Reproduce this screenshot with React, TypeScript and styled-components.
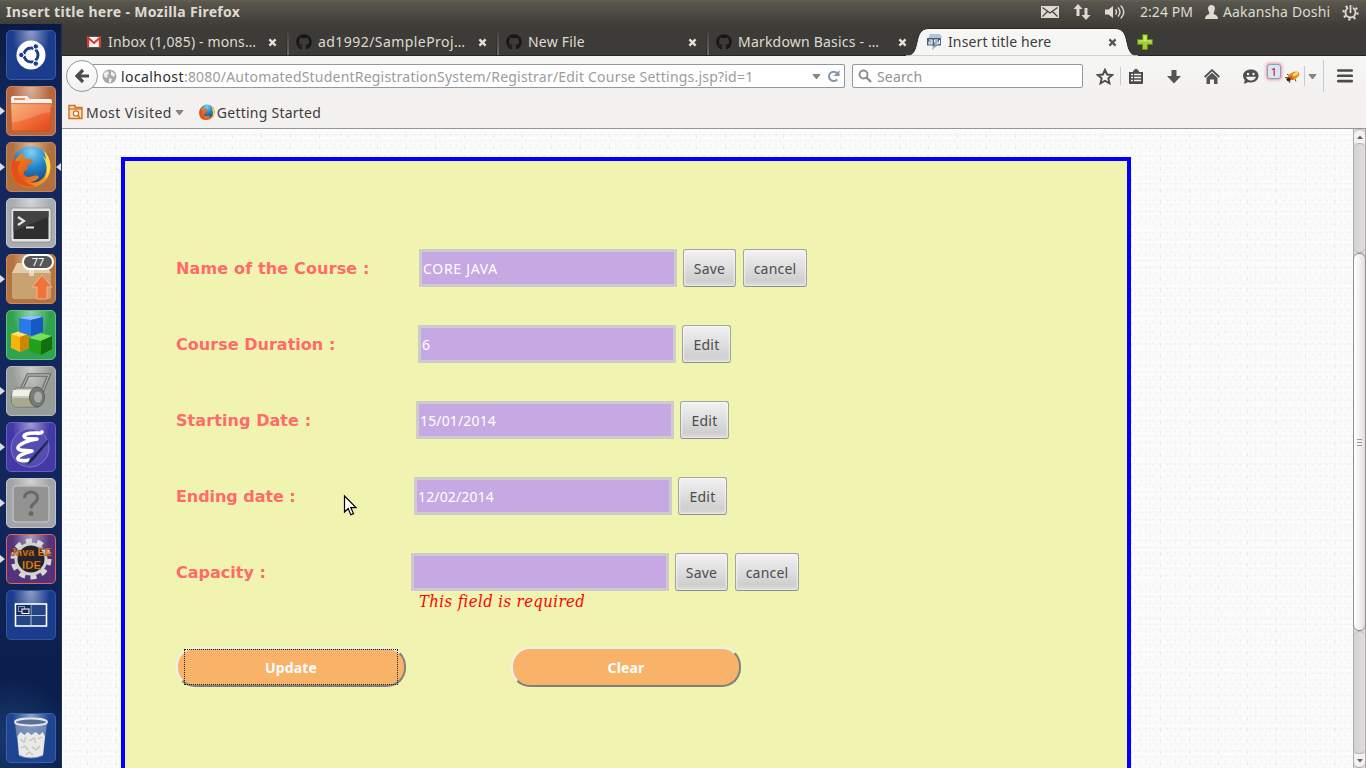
import React from 'react';
import styled, { createGlobalStyle, css } from 'styled-components';
import { FaGithub } from 'react-icons/fa';

const GlobalStyle = createGlobalStyle`
  * { box-sizing: border-box; }
  html, body { margin: 0; padding: 0; overflow: hidden; }
  body { font: 14px/20px "Noto Sans", "Open Sans", sans-serif; color: #3c3c3c; }
`;

const Screen = styled.div`
  position: relative;
  width: 1366px;
  height: 768px;
  display: flex;
  flex-direction: column;
  overflow: hidden;
`;

const Text = styled.span<{ $track?: number }>`
  white-space: pre;
  letter-spacing: ${p => p.$track ?? 0}px;
`;

/* ---------- top panel ---------- */
const TopPanel = styled.header`
  flex: none;
  height: 24px;
  display: flex;
  align-items: center;
  padding: 0 7px 0 6px;
  color: #dfdbd2;
  background: linear-gradient(#646052 0, #59564d 2px, #3f3e39 100%);
`;
const WindowTitle = styled(Text)`
  flex: 1;
  font-weight: bold;
`;
const Indicator = styled.span<{ $w: number }>`
  display: flex;
  align-items: center;
  flex: none;
  width: ${p => p.$w}px;
  svg { display: block; flex: none; }
`;

const Below = styled.div`
  flex: 1;
  min-height: 0;
  display: flex;
`;

/* ---------- launcher ---------- */
const Launcher = styled.nav`
  flex: none;
  width: 62px;
  display: flex;
  flex-direction: column;
  gap: 6px;
  padding: 6px 0 5px 6px;
  border-right: 1px solid #26334f;
  background: radial-gradient(circle at 20% 96%, #1b3a72 0, transparent 60px),
    linear-gradient(#0a1a42 0, #14285f 12%, #13275a 35%, #11265c 65%, #0b1f4e 88%, #0a204b 100%);
`;
const Tile = styled.div<{ $bg: string; $edge?: string; $last?: boolean }>`
  position: relative;
  flex: none;
  width: 50px;
  height: 50px;
  border-radius: 5px;
  border: 1px solid ${p => p.$edge ?? 'rgba(255,255,255,.22)'};
  background: radial-gradient(ellipse at 50% 0, rgba(255,255,255,.5) 0, transparent 55%), ${p => p.$bg};
  ${p => p.$last && css`margin-top: auto;`}
  > svg { display: block; width: 48px; height: 48px; }
`;
const Running = styled.i<{ $right?: boolean }>`
  position: absolute;
  top: 20px;
  ${p => (p.$right ? 'right: -6px;' : 'left: -7px;')}
  border: solid transparent;
  border-width: 4px 0;
  ${p => (p.$right ? 'border-right: 5px solid #ddd;' : 'border-left: 5px solid #ddd;')}
`;
const Count = styled.b`
  position: absolute;
  top: -1px;
  left: 15px;
  width: 32px;
  height: 16px;
  border: 2px solid #fff;
  border-radius: 8px;
  background: #565656;
  color: #fff;
  font: 11px/12px "Noto Sans", sans-serif;
  text-align: center;
`;

/* ---------- browser ---------- */
const Browser = styled.main`
  flex: 1;
  min-width: 0;
  display: flex;
  flex-direction: column;
`;
const TabStrip = styled.div`
  flex: none;
  height: 32px;
  display: flex;
  padding-left: 15px;
  background: linear-gradient(#3f3e39, #3c3b37 6px, #3c3b37 31px, #262522 31px);
`;
const TabBox = styled.div<{ $active?: boolean; $line?: boolean }>`
  position: relative;
  flex: none;
  width: 210px;
  display: flex;
  align-items: center;
  padding: 4px 9px 0 8px;
  color: ${p => (p.$active ? '#3c3c3c' : '#dfdbd2')};
  ${p => p.$line && css`
    &::after {
      content: '';
      position: absolute;
      right: -2px;
      top: 4px;
      bottom: 1px;
      width: 2px;
      border-left: 1px solid #2a2926;
      background: #6b6a5f;
      mask: linear-gradient(transparent, #000);
    }
  `}
`;
const TabShape = styled.svg`
  position: absolute;
  left: -14px;
  top: 3px;
  width: 238px;
  height: 29px;
`;
const Favicon = styled.span`
  position: relative;
  display: flex;
  justify-content: center;
  align-items: center;
  width: 18px;
  height: 18px;
  margin-right: 5px;
`;
const TabTitle = styled(Text)`
  position: relative;
  flex: 1;
`;
const CloseMark = styled.svg`
  position: relative;
  width: 9px;
  height: 9px;
  margin-right: 1px;
`;
const NewTab = styled.svg`
  width: 18px;
  height: 18px;
  margin: 9px 0 0 9px;
`;

const NavBar = styled.div`
  flex: none;
  height: 40px;
  display: flex;
  align-items: center;
  background: linear-gradient(#f6f6f5, #f2f1f0);
`;
const BackButton = styled.div`
  position: relative;
  z-index: 1;
  display: flex;
  justify-content: center;
  align-items: center;
  width: 32px;
  height: 32px;
  margin-left: 4px;
  border: 1px solid #8f99a6;
  border-radius: 50%;
  background: linear-gradient(#fff, #f1f1f0);
`;
const Field = styled.div<{ $w: number }>`
  flex: none;
  display: flex;
  align-items: center;
  width: ${p => p.$w}px;
  height: 24px;
  border: 1px solid #96979a;
  border-radius: 2px;
  background: #fff;
`;
const UrlField = styled(Field)`
  margin: 0 7px 0 -10px;
  padding: 0 4px 0 14px;
  border-left: 0;
`;
const Address = styled(Text)`
  flex: 1;
  margin-left: 4px;
  padding-top: 1px;
  color: #9b9b9b;
  b { color: #2b2b2b; font-weight: normal; letter-spacing: .42px; }
`;
const SearchField = styled(Field)`
  padding-left: 5px;
  gap: 5px;
  margin-right: 6px;
  color: #929292;
`;
const SearchHint = styled(Text)`
  padding-top: 1px;
`;
const Slot = styled.span<{ $w: number; $shift?: number }>`
  position: relative;
  flex: none;
  display: flex;
  justify-content: center;
  align-items: center;
  width: ${p => p.$w}px;
  height: 40px;
  padding-left: ${p => p.$shift ?? 0}px;
`;
const Divider = styled.i<{ $h: number }>`
  flex: none;
  width: 1px;
  height: ${p => p.$h}px;
  background: #c3ccd6;
`;
const ErrorBadge = styled.b`
  position: absolute;
  z-index: 1;
  left: -6px;
  top: 8px;
  width: 14px;
  height: 15px;
  border: 1px solid #8d9dbb;
  border-radius: 3px;
  background: #dce5f2;
  box-shadow: 0 0 3px 1px #e59a9a;
  color: #c00020;
  font: 11px/13px "Noto Sans", sans-serif;
  text-align: center;
`;
const Bookmarks = styled.div`
  flex: none;
  height: 33px;
  display: flex;
  align-items: center;
  padding-left: 6px;
  background: #f2f1f0;
  border-bottom: 1px solid #979694;
`;
const BookmarkText = styled(Text)`
  margin-left: 2px;
  padding-top: 2px;
`;
const Caret = styled.svg<{ $gap?: string }>`
  flex: none;
  width: 9px;
  height: 7px;
  margin: ${p => p.$gap ?? '0'};
`;

/* ---------- page ---------- */
const Viewport = styled.div`
  flex: 1;
  min-height: 0;
  display: flex;
`;
const Page = styled.div`
  position: relative;
  flex: 1;
  padding: 28px 0 0 59px;
  background-color: #fcfcfc;
  background-image:
    radial-gradient(circle, #e6e6e6 0, transparent 1.2px),
    radial-gradient(circle, #eeeeee 0, transparent 1.2px),
    radial-gradient(ellipse 1px 2px, #e2e2e2 0, transparent 100%),
    radial-gradient(circle, #f4f4f4 0, transparent 1.5px),
    radial-gradient(circle, #f6f6f6 0, transparent 1.5px);
  background-size: 7.25px 11px, 7.25px 11px, 29px 11px, 5px 4px, 3px 7px;
  background-position: 0 0, 3.6px 5.5px, 11px 2px, 1px 1px, 0 2px;
`;
const Panel = styled.section`
  width: 1010px;
  height: 700px;
  border: 4px solid #0000ff;
  background: #f1f3b0;
  padding: 88px 0 0 51px;
`;
const Rows = styled.div`
  display: flex;
  flex-direction: column;
  gap: 38px;
`;
const Row = styled.div`
  display: flex;
  height: 38px;
`;
const Label = styled.label<{ $w: number; $track: number }>`
  flex: none;
  width: ${p => p.$w}px;
  padding-top: 1px;
  color: #ff6a6a;
  font: bold 16px/38px "DejaVu Sans", sans-serif;
  letter-spacing: ${p => p.$track}px;
`;
const Input = styled.div<{ $track?: number }>`
  flex: none;
  width: 258px;
  height: 38px;
  margin-right: 6px;
  padding: 1px 1px 0;
  border: 3px solid #cccccc;
  background: #c6a9e3;
  color: #fff;
  line-height: 32px;
  letter-spacing: ${p => p.$track ?? 0}px;
`;
const Button = styled.button<{ $w: number }>`
  flex: none;
  width: ${p => p.$w}px;
  height: 38px;
  margin: 0 7px 0 0;
  padding: 1px 0 0;
  border: 1px solid #a3a3a3;
  border-bottom-color: #8d8d8d;
  border-radius: 3px;
  background: linear-gradient(#f1f1f1, #dedede 50%, #cfcfcf 85%, #d8d8d8);
  box-shadow: inset 0 0 2px 1px rgba(255,255,255,.6);
  color: #4c4c4c;
  font: 14px/20px "Noto Sans", sans-serif;
  letter-spacing: .2px;
`;
const ErrorText = styled.p`
  margin: 1px 0 35px 243px;
  color: #ff0000;
  font: italic 16.5px/20px "DejaVu Serif Condensed", "DejaVu Serif", serif;
  letter-spacing: .43px;
`;
const Actions = styled.div`
  display: flex;
  gap: 105px;
`;
const Pill = styled.button<{ $focused?: boolean }>`
  position: relative;
  width: 230px;
  height: 40px;
  padding: 2px 0 0;
  border: 2px solid;
  border-color: #f0f0f0 #808080 #808080 #f0f0f0;
  border-radius: 19px;
  background: #f9b369;
  color: #fff;
  font: bold 14px/20px "Noto Sans", sans-serif;
  letter-spacing: .15px;
  ${p => p.$focused && css`
    &::after {
      content: '';
      position: absolute;
      inset: 0 6px;
      border: 1px dotted #222;
    }
  `}
`;

/* ---------- scrollbar ---------- */
const Scrollbar = styled.div`
  flex: none;
  width: 13px;
  display: flex;
  flex-direction: column;
  background: #dbdad8;
  border: 1px solid #aeadab;
  border-width: 0 1px;
`;
const Stepper = styled.span<{ $down?: boolean }>`
  flex: none;
  height: 14px;
  display: flex;
  align-items: center;
  justify-content: center;
  border: 1px solid #aaa9a6;
  border-width: ${p => (p.$down ? '0 0 1px' : '1px 0 0')};
  border-radius: ${p => (p.$down ? '0 0 6px 6px' : '6px 6px 0 0')};
  background: #f3f2f1;
`;
const Trough = styled.span<{ $h: number }>`
  flex: none;
  height: ${p => p.$h}px;
  border: 1px solid #b5b4b1;
  border-width: 1px 0;
  border-radius: 6px;
  background: linear-gradient(90deg, #d3d2d0, #e0dfdd);
`;
const Thumb = styled.span`
  flex: none;
  height: 378px;
  margin: 0 -1px;
  display: flex;
  align-items: center;
  justify-content: center;
  border: 1px solid #8f8e8a;
  border-radius: 6px;
  background: linear-gradient(90deg, #fff, #f1f0ee 55%, #dedddb);
`;

const Cursor = styled.svg`
  position: absolute;
  left: 343px;
  top: 494px;
  width: 14px;
  height: 23px;
`;

const Down = ({ gap }: { gap?: string }) => (
  <Caret $gap={gap} viewBox="0 0 9 7"><path d="M1 1.500h7L4.500 6z" fill="#8a8a8a" stroke="#666" strokeWidth=".7" /></Caret>
);

const FirefoxBall = () => (
  <>
    <defs>
      <linearGradient id="ffFox" x1="0" y1="0" x2="1" y2="1">
        <stop offset="0" stopColor="#f59a21" /><stop offset=".5" stopColor="#e5591a" /><stop offset="1" stopColor="#f6b526" />
      </linearGradient>
      <radialGradient id="ffSky" cx=".5" cy=".15" r=".9">
        <stop offset="0" stopColor="#7fd0f4" /><stop offset=".45" stopColor="#2485c9" /><stop offset="1" stopColor="#14316f" />
      </radialGradient>
    </defs>
    <circle cx="24" cy="23" r="19.500" fill="url(#ffSky)" />
    <path d="M37 8c9 8 9 23 0 31-9 8-23 7-30-1C2 30 3 20 7 13l1 5c2-4 5-7 9-8-1 3-1 4 1 6 3 0 6 0 8 1-1 3-4 4-6 6l1 4c-3 0-5 1-4 4 2 4 6 3 9 2 4-1 5 0 6 1-2 4-7 5-10 5 9 2 15-3 17-10 2-7 2-14-1-20z" fill="url(#ffFox)" />
    <path d="M36 7c9 8 10 21 2 30 3-9 2-19-3-24 3 2 4 3 4 5 0-4-1-8-3-11z" fill="#fbe04a" />
    <path d="M7 13c-4 8-4 17 1 24 5 5 13 8 20 6-9-2-15-7-17-15 0-5 1-7 3-10-3 0-5 1-6 0z" fill="#e2501b" />
  </>
);

const Github = () => <FaGithub size={16} color="#181715" />;

const tabs = [
  { title: 'Inbox (1,085) - mons…', track: 0.14, mail: true },
  { title: 'ad1992/SampleProj…', track: 0.44 },
  { title: 'New File', track: 0.2 },
  { title: 'Markdown Basics - …', track: 0.2 },
];

const fields = [
  { label: 'Name of the Course :', w: 243, spacing: 0.15, value: 'CORE JAVA', track: 0.7, editing: true },
  { label: 'Course Duration :', w: 242, spacing: 0.03, value: '6', track: 0 },
  { label: 'Starting Date :', w: 240, spacing: 0.08, value: '15/01/2014', track: 0.15 },
  { label: 'Ending date :', w: 238, spacing: -0.06, value: '12/02/2014', track: 0.15 },
  { label: 'Capacity :', w: 235, spacing: 0, value: '', track: 0, editing: true },
];

const Close = ({ color }: { color: string }) => (
  <CloseMark viewBox="0 0 9 9"><path d="M1.400 1.400l6.200 6.200M7.600 1.400L1.400 7.600" stroke={color} strokeWidth="2.300" /></CloseMark>
);

function LauncherTiles() {
  return (
    <Launcher>
      <Tile $bg="#1c3c8e" $edge="#3d5aa5">
        <svg viewBox="0 0 48 48">
          <circle cx="24" cy="24" r="14.5" fill="#fff" />
          <circle cx="24" cy="24" r="7" fill="none" stroke="#1c3c8e" strokeWidth="3" />
          <g stroke="#fff" strokeWidth="1.6"><path d="M24 24H14M24 24l5.5 9.5M24 24l5.5-9.5" /></g>
          <circle cx="24" cy="24" r="5.2" fill="#fff" />
          <g fill="#1c3c8e" stroke="#fff"><circle cx="14.3" cy="24" r="2.7" /><circle cx="28.8" cy="15.4" r="2.7" /><circle cx="28.8" cy="32.6" r="2.7" /></g>
        </svg>
      </Tile>
      <Tile $bg="#b5683f" $edge="#c98861">
        <Running />
        <svg viewBox="0 0 48 48">
          <defs><linearGradient id="folder" x1="0" y1="0" x2="1" y2="1"><stop offset="0" stopColor="#f7a45c" /><stop offset=".5" stopColor="#f0703a" /><stop offset="1" stopColor="#e2461a" /></linearGradient></defs>
          <path d="M4 11q0-2 2-2h14l3 3h20q2 0 2 2v6H4z" fill="#f6f1ec" />
          <path d="M7 11h11v2H7z" fill="#ee8a5a" />
          <path d="M3.500 16.500h41l-1 26q0 1.500-2 1.500h-35q-2 0-2-1.500z" fill="url(#folder)" stroke="#c4501f" strokeWidth=".6" />
          <path d="M4.500 17.500h39l-.3 8c-12 0-21 8-38 10z" fill="#fff" opacity=".18" />
        </svg>
      </Tile>
      <Tile $bg="#b0703f" $edge="#c08a5c">
        <Running /><Running $right />
        <svg viewBox="0 0 48 48"><FirefoxBall /></svg>
      </Tile>
      <Tile $bg="#a9acb0" $edge="#c5c7c9">
        <svg viewBox="0 0 48 48">
          <rect x="4" y="9" width="40" height="34" rx="2" fill="#e3e3e1" stroke="#8c8c8c" strokeWidth=".8" />
          <rect x="6.500" y="12" width="35" height="28" fill="#2e2e2e" />
          <path d="M6.500 12h35v6L6.500 32z" fill="#424242" />
          <path d="M11 18l6 4-6 4M19 28.500h8" fill="none" stroke="#e4e4e4" strokeWidth="2.200" />
        </svg>
      </Tile>
      <Tile $bg="#b4733f" $edge="#c6905f">
        <Running />
        <svg viewBox="0 0 48 48">
          <path d="M10 8h28l6 10v24q0 2-2 2H7q-2 0-2-2V18z" fill="#c9a272" />
          <path d="M10 8h28l6 10H5z" fill="#e3cda6" />
          <path d="M22 8h5v13h-5z" fill="#efe3cb" opacity=".8" />
          <path d="M35 20l10 12h-5v12H30V32h-5z" fill="#f0743a" stroke="#f7b08a" strokeWidth="1" />
        </svg>
        <Count>77</Count>
      </Tile>
      <Tile $bg="#2fa350" $edge="#62c07a">
        <svg viewBox="0 0 48 48">
          <path d="M4 23l9-3 9 3v14l-9 4-9-4z" fill="#f6b40c" /><path d="M4 23l9-3 9 3-9 3z" fill="#ffe06a" /><path d="M13 26l9-3v14l-9 4z" fill="#c98702" />
          <path d="M22 27l11-5 12 3v13l-11 6-12-4z" fill="#25a01a" /><path d="M22 27l11-5 12 3-11 5z" fill="#79dd5d" /><path d="M34 30l11-5v13l-11 6z" fill="#12700d" />
          <path d="M12 7l12-3 12 2v15l-12 4-12-4z" fill="#2a7be8" /><path d="M12 7l12-3 12 2-12 3z" fill="#8dc4fb" /><path d="M24 9l12-3v15l-12 4z" fill="#1858c4" />
        </svg>
      </Tile>
      <Tile $bg="#979d97" $edge="#b4b9b4">
        <Running />
        <svg viewBox="0 0 48 48">
          <path d="M15 21l6-13h21l-8 20" fill="none" stroke="#666b66" strokeWidth="3.500" /><path d="M15 21l6-13h21l-8 20" fill="none" stroke="#aeb1ae" strokeWidth="1.300" />
          <path d="M9 21h23v19H8q-4-3-4-9t5-10z" fill="#c4c6bd" stroke="#6e726b" /><path d="M6 23h24v6H5z" fill="#f0f0e6" /><path d="M5 31h21v8H8q-3-3-3-8z" fill="#a7ab8e" />
          <ellipse cx="30" cy="30" rx="7.500" ry="10" fill="#777a77" stroke="#5a5d5a" /><ellipse cx="31" cy="30" rx="4" ry="5.500" fill="#a9aba9" />
        </svg>
      </Tile>
      <Tile $bg="#4437a8" $edge="#6a60c4">
        <Running />
        <svg viewBox="0 0 48 48">
          <circle cx="23" cy="25" r="19" fill="#554cb4" stroke="#7d79c9" />
          <path d="M35 9c-1 2-3 1-7 1-6 0-11 1-11 3 0 3 8 3 13 3-8 1-19 5-19 9 0 3 8 2 14 3-8 2-15 5-14 8 1 2 7 2 11 1" fill="none" stroke="#fff" strokeWidth="3.600" strokeLinecap="round" strokeLinejoin="round" />
          <path d="M42 15l-1 5L27 37l-8 7 4-8z" fill="#1d2553" stroke="#4d63a8" strokeWidth=".6" />
        </svg>
      </Tile>
      <Tile $bg="#a2a4a8" $edge="#c4c5c8">
        <Running />
        <svg viewBox="0 0 48 48">
          <rect x="6" y="7" width="36" height="36" rx="3" fill="#939393" stroke="#bcbcbc" strokeWidth="1.500" />
          <path d="M17.500 19c0-8 13-8 13 0 0 5-6.500 5-6.500 10.500" fill="none" stroke="#686868" strokeWidth="3" /><circle cx="24" cy="34.500" r="2.500" fill="#686868" />
        </svg>
      </Tile>
      <Tile $bg="#55337c" $edge="#e0664f">
        <Running />
        <svg viewBox="0 0 48 48">
          <circle cx="24" cy="24" r="18" fill="none" stroke="#d8d8d8" strokeWidth="5" strokeDasharray="6 5.310" />
          <circle cx="24" cy="24" r="15" fill="#26222c" stroke="#d2d2d2" strokeWidth="3" />
          <g fill="#f58a1f" stroke="#3a1c08" strokeWidth=".3" fontFamily="Liberation Sans, sans-serif" fontWeight="bold" fontSize="10.500">
            <text x="3" y="21" textLength="42" lengthAdjust="spacingAndGlyphs">Java EE</text><text x="15" y="33.500" textLength="19" lengthAdjust="spacingAndGlyphs">IDE</text>
          </g>
        </svg>
      </Tile>
      <Tile $bg="#1a3c8c" $edge="#35559f">
        <svg viewBox="0 0 48 48">
          <rect x="8.500" y="13" width="31" height="22" fill="#254683" stroke="#fff" strokeWidth="1.600" />
          <path d="M24 13v22M9 24.500h30" stroke="#b9c4da" />
          <rect x="9.500" y="14" width="14" height="10" fill="#152c5c" /><rect x="11.500" y="15.500" width="6" height="5" fill="none" stroke="#8d9ab5" /><rect x="15" y="18" width="7" height="4.500" fill="#152c5c" stroke="#fff" />
        </svg>
      </Tile>
      <Tile $bg="#1f4592" $edge="#3c60a8" $last>
        <svg viewBox="0 0 48 48">
          <path d="M8 8l4 34q12 5 24 0l4-34z" fill="#8a9cbf" opacity=".7" />
          <path d="M10.500 22l3-4 4 3 3-3 4 3 4-3 4 3 3-3 2.500 4-2 19q-12 5-24 0z" fill="#e9e9e7" />
          <path d="M13 25l4 3 2-5M22 27l5-3 2 5M31 25l4-2M14 34l4-2 3 4M25 33l4 3 4-4M19 41l3-3 4 3" fill="none" stroke="#c2c2c0" strokeWidth="1.300" />
          <ellipse cx="24" cy="8" rx="16" ry="3.500" fill="#5c6f97" stroke="#e3e6ea" strokeWidth="1.800" />
        </svg>
      </Tile>
    </Launcher>
  );
}

export default function App() {
  return (
    <Screen>
      <GlobalStyle />
      <TopPanel>
        <WindowTitle $track={0.31}>Insert title here - Mozilla Firefox</WindowTitle>
        <Indicator $w={32}>
          <svg width="18" height="12" viewBox="0 0 18 12"><rect width="18" height="12" fill="#dfdbd2" /><path d="M1.500 1.500L9 7l7.500-5.500M1.500 10.500L6.500 5.500M16.500 10.500l-5-5" fill="none" stroke="#45433d" strokeWidth="1.200" /></svg>
        </Indicator>
        <Indicator $w={32}>
          <svg width="18" height="16" viewBox="0 0 18 16"><path d="M5 0l4.500 5H6.500v7h-3V5H.5zM13 16l4.500-5h-3V4h-3v7h-3z" fill="#dfdbd2" /></svg>
        </Indicator>
        <Indicator $w={35}>
          <svg width="20" height="16" viewBox="0 0 20 16"><path d="M0 5.500h3.500L8 2v12l-4.500-3.500H0z" fill="#dfdbd2" /><path d="M10.500 5.500q2 2.500 0 5M13 3.500q4 4.500 0 9M15.800 1.500q6 6.500 0 13" fill="none" stroke="#dfdbd2" strokeWidth="1.400" /></svg>
        </Indicator>
        <Indicator $w={64}><Text $track={0.05}>2:24 PM</Text></Indicator>
        <Indicator $w={19}>
          <svg width="15" height="14" viewBox="0 0 15 14"><path d="M7.500 0c4 0 4 4 2.500 7-.5 1-.5 2 .5 2.500 2 .8 3.500 1.500 3.500 4.500H1c0-3 1.500-3.700 3.500-4.500 1-.5 1-1.500.5-2.500C3.500 4 3.500 0 7.500 0z" fill="#dfdbd2" /></svg>
        </Indicator>
        <Indicator $w={119}><Text $track={0.14}>Aakansha Doshi</Text></Indicator>
        <Indicator $w={17}>
          <svg width="17" height="17" viewBox="0 0 17 17"><circle cx="8.500" cy="8.500" r="5" fill="none" stroke="#dfdbd2" strokeWidth="1.800" /><circle cx="8.500" cy="8.500" r="7" fill="none" stroke="#dfdbd2" strokeWidth="2.200" strokeDasharray="2.200 3.300" /><path d="M8.500 0v8" stroke="#4a4841" strokeWidth="4.500" /><path d="M8.500 1v8" stroke="#dfdbd2" strokeWidth="1.800" /></svg>
        </Indicator>
      </TopPanel>

      <Below>
        <LauncherTiles />
        <Browser>
          <TabStrip>
            {tabs.map((t, i) => (
              <TabBox key={t.title} $line={i < 3}>
                <Favicon>
                  {t.mail ? (
                    <svg width="14" height="12" viewBox="0 0 15 12"><rect x=".5" y=".5" width="14" height="11" fill="#f2f0ee" /><path d="M1.200 12V1.500l6.300 5.500 6.300-5.500V12" fill="none" stroke="#d8382c" strokeWidth="2.200" /></svg>
                  ) : <Github />}
                </Favicon>
                <TabTitle $track={t.track}>{t.title}</TabTitle>
                <Close color="#e6e3dc" />
              </TabBox>
            ))}
            <TabBox $active>
              <TabShape viewBox="0 0 238 29">
                <path d="M2 29C20 29 8 1.500 26 1.500H212C230 1.500 218 29 236 29z" fill="#f6f6f5" stroke="#2a2926" strokeWidth="1" /><path d="M3 28.700h232" stroke="#f6f6f5" strokeWidth=".8" />
              </TabShape>
              <Favicon>
                <svg width="15" height="16" viewBox="0 0 15 16"><path d="M3 0h10l2 3-3 2H1z" fill="#b4c4d4" /><path d="M5 16l7-6H3l3 2z" fill="#93a9bf" /><rect y="4" width="14" height="7.500" fill="#41607f" /><path d="M2 6h3v4H2V8h3M11 6H7.500v2H11v2H7.500M12.500 6v4" fill="none" stroke="#fff" strokeWidth="1.100" /></svg>
              </Favicon>
              <TabTitle $track={0.12}>Insert title here</TabTitle>
              <Close color="#555" />
            </TabBox>
            <NewTab viewBox="0 0 18 18"><path d="M6.500 1.500h5v5h5v5h-5v5h-5v-5h-5v-5h5z" fill="#a4cb37" stroke="#5f8a14" /><path d="M7.500 2.500h3v5h5v1h-13v-1h5z" fill="#cbe673" /></NewTab>
          </TabStrip>

          <NavBar>
            <BackButton>
              <svg width="16" height="16" viewBox="0 0 16 16"><path d="M9 2L3 8l6 6M3.500 8h11.500" fill="none" stroke="#4b4b4b" strokeWidth="3.200" /></svg>
            </BackButton>
            <UrlField $w={757}>
              <svg width="15" height="15" viewBox="0 0 15 15"><circle cx="7.500" cy="7.500" r="7" fill="#a9a9a9" /><path d="M2 4l4-2 1 3-2 1 1 2-2 1-2-2zM9 2l4 3-1 3-3-2zM7 9l3 1-1 3-2 1z" fill="#f0f0f0" /></svg>
              <Address $track={0.21}><b>localhost</b>:8080/AutomatedStudentRegistrationSystem/Registrar/Edit Course Settings.jsp?id=1</Address>
              <Down gap="0 6px 0 0" />
              <svg width="13" height="13" viewBox="0 0 13 13"><path d="M10.200 9.500A4.700 4.700 0 1 1 10 3" fill="none" stroke="#8494a6" strokeWidth="2" /><path d="M12.500 0v6H6.500z" fill="#8494a6" /></svg>
            </UrlField>
            <SearchField $w={231}>
              <svg width="14" height="14" viewBox="0 0 14 14"><circle cx="5.500" cy="5.500" r="4" fill="none" stroke="#8d8d8d" strokeWidth="1.900" /><path d="M8.500 8.500l4.500 4.500" stroke="#8d8d8d" strokeWidth="2.400" /></svg>
              <SearchHint $track={0.15}>Search</SearchHint>
            </SearchField>
            <Slot $w={31}>
              <svg width="18" height="17" viewBox="0 0 18 17"><path d="M9 1.800l2.100 4.700 5.100.5-3.900 3.400 1.200 5L9 12.800l-4.500 2.600 1.200-5L1.800 7l5.100-.5z" fill="none" stroke="#4b4b4b" strokeWidth="1.900" /></svg>
            </Slot>
            <Divider $h={18} />
            <Slot $w={30}>
              <svg width="14" height="15" viewBox="0 0 14 15"><path d="M0 3h4V1.500h1.500V0h3v1.500H10V3h4v11q0 1-1 1H1q-1 0-1-1z" fill="#4b4b4b" /><path d="M2 5.500h2M5 5.500h7M2 8.500h2M5 8.500h7M2 11.500h2M5 11.500h7" stroke="#f3f2f1" strokeWidth="1.700" /></svg>
            </Slot>
            <Slot $w={46}>
              <svg width="14" height="15" viewBox="0 0 14 15"><path d="M4.500 1h5v6H14l-7 7.500L0 7h4.500z" fill="#555" /></svg>
            </Slot>
            <Slot $w={30}>
              <svg width="16" height="15" viewBox="0 0 16 15"><path d="M.7 8L8 1.200 15.300 8" fill="none" stroke="#4b4b4b" strokeWidth="1.800" /><path d="M2.500 8.800L8 3.800l5.500 5V15H10v-4.500H6V15H2.500z" fill="#555" /></svg>
            </Slot>
            <Slot $w={46}>
              <svg width="17" height="15" viewBox="0 0 17 15"><path d="M9 .5c4.500 0 7.500 2.700 7.500 6.300S13.500 13.500 9 13.500q-1.500 0-3-.5-2 1.700-4.500 1.500 1.500-1.500 1.200-3.500Q1 9 1 6.800C1 3.200 4.500.5 9 .5z" fill="#4f4f4f" /><circle cx="6" cy="5" r="1.200" fill="#f3f2f1" /><circle cx="11.500" cy="5" r="1.200" fill="#f3f2f1" /><path d="M4 7.800h10q-1 3.700-5 3.700T4 7.800z" fill="#f3f2f1" /></svg>
            </Slot>
            <Slot $w={31} $shift={8}>
              <ErrorBadge>1</ErrorBadge>
              <svg width="15" height="13" viewBox="0 0 15 13"><path d="M3 8L0 7.500M4 5.500L2 4M10 9l1 2.500M5 11l-.5 2" stroke="#6b4514" /><ellipse cx="8.500" cy="5.800" rx="6.200" ry="3.500" transform="rotate(-28 8.500 5.800)" fill="#e98a1a" /><ellipse cx="10.500" cy="4" rx="3" ry="1.500" transform="rotate(-28 10.500 4)" fill="#fde07a" /><circle cx="3.600" cy="9.300" r="2.100" fill="#3a2410" /><path d="M5.500 6l2.500 4" stroke="#b8400e" /></svg>
            </Slot>
            <Divider $h={20} />
            <Slot $w={14}><Down /></Slot>
            <Slot $w={4} />
            <Divider $h={32} />
            <Slot $w={42}>
              <svg width="16" height="14" viewBox="0 0 16 14"><path d="M1.200 1.500h13.600M1.200 6.800h13.600M1.200 12.100h13.600" stroke="#4b4b4b" strokeWidth="2.600" strokeLinecap="round" /></svg>
            </Slot>
          </NavBar>

          <Bookmarks>
            <svg width="16" height="16" viewBox="0 0 16 16"><path d="M1 14.500V1.500h6v2h7v11z" fill="#fbe0bd" stroke="#d0701a" strokeWidth="1.400" /><path d="M1 5h13" stroke="#d0701a" strokeWidth="1.300" /><circle cx="8" cy="9.500" r="2.600" fill="#fff" stroke="#d0701a" strokeWidth="1.300" /><path d="M9.500 11l2.500 2.500" stroke="#d0701a" strokeWidth="1.500" /></svg>
            <BookmarkText $track={0.45}>Most Visited</BookmarkText>
            <Down gap="1px 15px 0 3px" />
            <svg width="16" height="16" viewBox="3 2 42 42"><FirefoxBall /></svg>
            <BookmarkText $track={0.24}>Getting Started</BookmarkText>
          </Bookmarks>

          <Viewport>
            <Page>
              <Panel>
                <Rows>
                  {fields.map(f => (
                    <Row key={f.label}>
                      <Label $w={f.w} $track={f.spacing}>{f.label}</Label>
                      <Input $track={f.track}>{f.value}</Input>
                      {f.editing ? (<><Button $w={53}>Save</Button><Button $w={64}>cancel</Button></>) : <Button $w={49}>Edit</Button>}
                    </Row>
                  ))}
                </Rows>
                <ErrorText>This field is required</ErrorText>
                <Actions>
                  <Pill $focused>Update</Pill>
                  <Pill>Clear</Pill>
                </Actions>
              </Panel>
            </Page>
            <Scrollbar>
              <Stepper><svg width="6" height="4" viewBox="0 0 6 4"><path d="M0 4l3-3.500L6 4z" fill="#666" /></svg></Stepper>
              <Trough $h={110} />
              <Thumb><svg width="5" height="8" viewBox="0 0 5 8"><path d="M0 1.500h5M0 4.500h5M0 7.500h5" stroke="#999" /></svg></Thumb>
              <Trough $h={123} />
              <Stepper $down><svg width="6" height="4" viewBox="0 0 6 4"><path d="M0 0l3 3.500L6 0z" fill="#666" /></svg></Stepper>
            </Scrollbar>
          </Viewport>
        </Browser>
      </Below>
      <Cursor viewBox="0 0 14 23"><path d="M1.500 2v16l3.700-3.500 2.600 6.300 2.700-1.200-2.700-6H13z" fill="#fff" stroke="#000" strokeWidth="1.200" /></Cursor>
    </Screen>
  );
}
